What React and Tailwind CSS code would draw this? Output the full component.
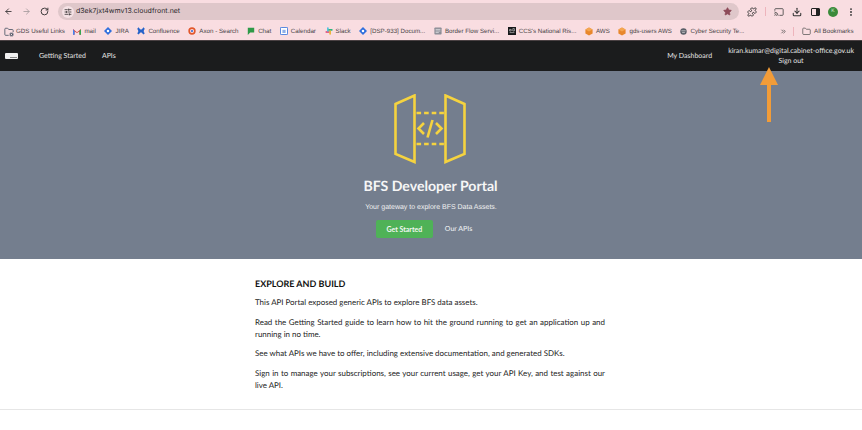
import React from 'react';
import { ArrowLeft, ArrowRight, RotateCw, Star, Puzzle, Cast, Download, EllipsisVertical, Folder, FolderCog, ChevronsRight, SlidersHorizontal } from 'lucide-react';

const Diamond = () => (
  <svg viewBox="0 0 10 10" className="w-2 h-2">
    <path d="M5 0 L10 5 L5 10 L0 5 Z" fill="#2f6fdd" />
    <circle cx="5" cy="5" r="1.6" fill="#fff" />
  </svg>
);

const Gmail = () => (
  <svg viewBox="0 0 10 8" className="w-2 h-[7px]">
    <path d="M0 8V1l5 4 5-4v7H8V4L5 6 2 4v4Z" fill="#d9453a" />
    <path d="M8 8V4l2-3v7Z" fill="#34a853" />
    <path d="M0 8V1l2 3v4Z" fill="#4285f4" />
  </svg>
);

const ConfluenceIcon = () => (
  <svg viewBox="0 0 10 10" className="w-2 h-2" fill="none" stroke="#2563c9" strokeWidth="2.2">
    <path d="M1 1.5 C3 3 3.5 7 1 8.5 M9 1.5 C7 3 6.5 7 9 8.5 M1 1.5 L9 8.5 M9 1.5 L1 8.5" />
  </svg>
);

const Axon = () => (
  <svg viewBox="0 0 10 10" className="w-2 h-2">
    <circle cx="5" cy="5" r="3.6" fill="none" stroke="#e2572b" strokeWidth="2" />
    <circle cx="5" cy="5" r="1.4" fill="#3b6fd1" />
  </svg>
);

const ChatIcon = () => (
  <svg viewBox="0 0 10 10" className="w-2 h-2">
    <path d="M1 1h8v6H4L1 10Z" fill="#2e9a48" />
  </svg>
);

const CalendarIcon = () => (
  <svg viewBox="0 0 10 10" className="w-2 h-2">
    <rect x="0.5" y="0.5" width="9" height="9" rx="1" fill="#fff" stroke="#3f78dc" strokeWidth="1.2" />
    <rect x="3" y="3.5" width="4" height="4" fill="#8fb0e8" />
  </svg>
);

const SlackIcon = () => (
  <svg viewBox="0 0 10 10" className="w-2 h-2" strokeWidth="2" strokeLinecap="round">
    <path d="M1.5 6.2H5" stroke="#de3d6b" />
    <path d="M3.6 1.4V5" stroke="#48bfe3" />
    <path d="M5 3.6h3.6" stroke="#2eb67d" />
    <path d="M6.4 5v3.6" stroke="#ecb22e" />
  </svg>
);

const BorderIcon = () => (
  <svg viewBox="0 0 10 10" className="w-2 h-2">
    <rect x="0.5" y="0.5" width="9" height="9" rx="1" fill="#8b8d96" />
    <path d="M2 3h6M2 5h6M2 7h4" stroke="#e8e8ea" strokeWidth="0.9" />
  </svg>
);

const CcsIcon = () => (
  <svg viewBox="0 0 10 10" className="w-2 h-2">
    <rect width="10" height="10" fill="#16181a" />
    <path d="M2 3h2v2H2ZM6 2h2v3H6ZM2 7h6" stroke="#e8e8e8" strokeWidth="0.7" fill="none" />
  </svg>
);

const AwsIcon = () => (
  <svg viewBox="0 0 10 10" className="w-2 h-[9px]">
    <path d="M5 0 L9.5 2.5 V7.5 L5 10 L0.5 7.5 V2.5 Z" fill="#e8872c" />
    <path d="M5 0 L9.5 2.5 L5 5 L0.5 2.5 Z" fill="#f4a650" />
  </svg>
);

const CyberIcon = () => (
  <svg viewBox="0 0 10 10" className="w-[7px] h-[7px]">
    <circle cx="5" cy="5" r="4.6" fill="#5a5f68" />
    <path d="M2 4h6M3 6.5h4" stroke="#e6e6e6" strokeWidth="0.9" />
  </svg>
);

const bookmarks = [
  { icon: <FolderCog className="w-[10px] h-[10px] text-gray-600 -mr-px" />, label: 'GDS Useful Links' },
  { icon: <Gmail />, label: 'mail' },
  { icon: <Diamond />, label: 'JIRA' },
  { icon: <ConfluenceIcon />, label: 'Confluence' },
  { icon: <Axon />, label: 'Axon - Search' },
  { icon: <ChatIcon />, label: 'Chat' },
  { icon: <CalendarIcon />, label: 'Calendar' },
  { icon: <SlackIcon />, label: 'Slack' },
  { icon: <Diamond />, label: '[DSP-933] Docum...' },
  { icon: <BorderIcon />, label: 'Border Flow Servi...' },
  { icon: <CcsIcon />, label: "CCS's National Ris..." },
  { icon: <AwsIcon />, label: 'AWS' },
  { icon: <AwsIcon />, label: 'gds-users AWS' },
  { icon: <CyberIcon />, label: 'Cyber Security Te...' },
];

const PortalLogo = () => (
  <svg viewBox="0 0 72 70" className="w-[72px] h-[70px] mr-[3px]" fill="none" stroke="#f5d33f" strokeWidth="2.6">
    <path d="M1.5 10 L20.5 1.5 V68 L1.5 60 Z" />
    <path d="M70.5 10 L51.5 1.5 V68 L70.5 60 Z" />
    <path d="M22.5 19 H50 M22.5 50 H50" strokeDasharray="4.6 3" />
    <path d="M30 29 L24.5 34.5 L30 40 M42 29 L47.5 34.5 L42 40" />
    <path d="M38.5 26 L33.5 43.5" />
  </svg>
);

const App = () => {
  return (
    <div className="relative w-[862px] h-[430px] overflow-hidden bg-white font-['Lato',sans-serif] [text-rendering:geometricPrecision]">
      {/* browser chrome */}
      <div className="h-[41px] bg-[#f9dde1] border-b border-[#4a4143] font-['Liberation_Sans',sans-serif]">
        <div className="h-[23px] flex items-center pl-[4px]">
          <div className="flex items-center gap-[9px] text-[#3d3a3b] w-[54px] shrink-0">
            <ArrowLeft className="w-[9px] h-[9px]" strokeWidth={2.4} />
            <ArrowRight className="w-[9px] h-[9px] text-[#a99ea0]" strokeWidth={2.4} />
            <RotateCw className="w-[9px] h-[9px]" strokeWidth={2.6} />
          </div>
          <div className="w-[681px] h-[17px] shrink-0 rounded-full bg-[#dfc7ca] flex items-center pl-[4px] pr-[7px]">
            <span className="w-[12px] h-[12px] rounded-full bg-[#f5e2e5] flex items-center justify-center">
              <SlidersHorizontal className="w-[8px] h-[8px] text-[#3d3a3b]" strokeWidth={2.5} />
            </span>
            <span className="ml-[2px] text-[7px] text-[#2e2a2c] font-['Inter',sans-serif]">d3ek7jxt4wmv13.cloudfront.net</span>
            <Star className="ml-auto w-[9px] h-[9px] text-[#8d4a58]" fill="#8d4a58" />
          </div>
          <Puzzle className="ml-[8px] w-[10px] h-[10px] text-[#333] shrink-0" strokeWidth={2.2} />
          <span className="ml-[8px] w-px h-[9px] bg-[#eeb4bc] shrink-0" />
          <Cast className="ml-[8px] w-[10px] h-[10px] text-[#444] shrink-0" strokeWidth={2} />
          <Download className="ml-[8px] w-[10px] h-[10px] text-[#333] shrink-0" strokeWidth={2.5} />
          <span className="ml-[9px] w-[9px] h-[8px] border border-[#222] bg-[linear-gradient(90deg,#f9dde1_50%,#222_50%)] rounded-[1px] shrink-0" />
          <span className="ml-[8px] w-[10px] h-[10px] rounded-full bg-[#3b8a3a] text-[5px] text-[#d5ecd5] flex items-center justify-center shrink-0">K</span>
          <EllipsisVertical className="ml-[8px] w-[10px] h-[10px] text-[#333] shrink-0" strokeWidth={2.5} />
        </div>
        <div className="h-[17px] flex items-center pl-[4px] text-[6.2px] text-[#4a4547]">
          <div className="flex items-center gap-[8.6px] w-[776px] shrink-0">
            {bookmarks.map((b) => (
              <div key={b.label} className="flex items-center gap-[3px] whitespace-nowrap">
                {b.icon}
                <span>{b.label}</span>
              </div>
            ))}
          </div>
          <ChevronsRight className="w-[7px] h-[7px] text-[#444] shrink-0" strokeWidth={2.5} />
          <span className="ml-[6px] w-px h-[9px] bg-[#eeb4bc] shrink-0" />
          <Folder className="ml-[8px] w-[9px] h-[9px] text-[#555] shrink-0" />
          <span className="ml-[3px] whitespace-nowrap">All Bookmarks</span>
        </div>
      </div>

      {/* portal nav */}
      <div className="h-[30px] bg-[#1b1c1d] flex items-center text-[7px] text-[#e4e4e4]">
        <div className="ml-[5px] w-[13px] h-[6px] bg-[#f0f0f0] rounded-[1px] flex items-end justify-end p-px">
          <span className="w-[7px] h-px bg-[#888]" />
        </div>
        <span className="ml-[21px]">Getting Started</span>
        <span className="ml-[16px]">APIs</span>
        <span className="ml-auto">My Dashboard</span>
        <div className="ml-[16px] mr-[8px] flex flex-col items-center leading-[10.5px]">
          <span>kiran.kumar@digital.cabinet-office.gov.uk</span>
          <span>Sign out</span>
        </div>
      </div>

      {/* hero */}
      <div className="h-[188px] bg-[#747e8e] flex flex-col items-center pt-[23px] text-white">
        <PortalLogo />
        <h1 className="mt-[13px] mr-[1px] text-[14.1px] leading-[20px] font-bold text-[#f6f6f6]">BFS Developer Portal</h1>
        <p className="mt-[6px] text-[7px] leading-[10px] text-[#f0f0f0] font-['Liberation_Sans',sans-serif]">Your gateway to explore BFS Data Assets.</p>
        <div className="mt-[7px] mr-[14px] flex items-center">
          <button className="w-[57px] h-[18px] rounded-[2px] bg-[#4fb257] text-[7px] font-bold text-[#f2f7f2]">Get Started</button>
          <span className="ml-[12px] text-[7px] font-medium text-[#eceef0]">Our APIs</span>
        </div>
      </div>

      {/* content */}
      <div className="h-[151px] border-b border-[#e6e6e6] pl-[255px] pr-[257px] pt-[19px] text-[#1c1c1c] text-[7.95px] leading-[12px] text-justify">
        <h2 className="text-[9px] leading-[12px] font-bold text-[#111] mb-[6px]">EXPLORE AND BUILD</h2>
        <p className="mb-[7.5px]">This API Portal exposed generic APIs to explore BFS data assets.</p>
        <p className="mb-[7.5px]">Read the Getting Started guide to learn how to hit the ground running to get an application up and running in no time.</p>
        <p className="mb-[7.5px]">See what APIs we have to offer, including extensive documentation, and generated SDKs.</p>
        <p>Sign in to manage your subscriptions, see your current usage, get your API Key, and test against our live API.</p>
      </div>

      {/* orange annotation arrow */}
      <div className="absolute left-[760px] top-[67px] flex flex-col items-center">
        <div className="w-0 h-0 border-l-[9.5px] border-r-[9.5px] border-b-[18px] border-l-transparent border-r-transparent border-b-[#f29c38]" />
        <div className="w-[4px] h-[37px] bg-[#f29c38]" />
      </div>
    </div>
  );
};

export default App;
